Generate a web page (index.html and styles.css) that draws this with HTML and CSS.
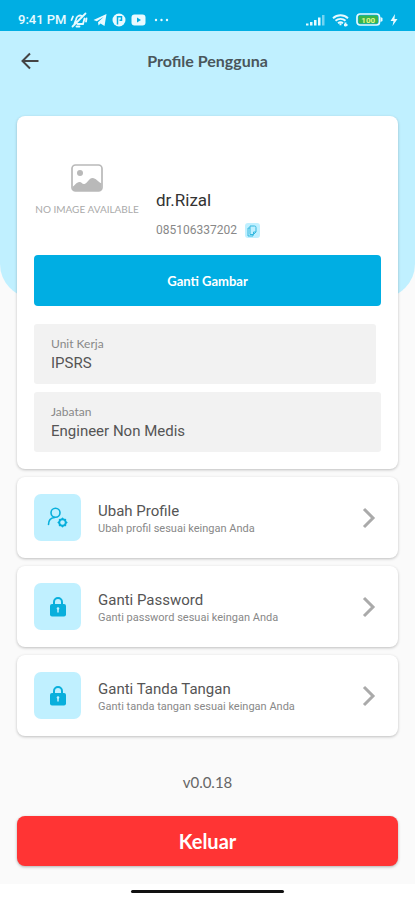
FILE: index.html
```html
<!DOCTYPE html>
<html lang="id">
<head>
<meta charset="utf-8">
<meta name="viewport" content="width=device-width, initial-scale=1">
<title>Profile Pengguna</title>
<link rel="stylesheet" href="styles.css">
</head>
<body>
<div class="status">
  <span class="time">9:41 PM</span>
  <svg class="s-bell" width="18" height="16" viewBox="0 0 18 16" fill="none" stroke="currentColor" stroke-width="1.800" stroke-linecap="round"><path d="M4.500 11.500 6 7.500C6.500 4 9.500 2.800 12 4M14.500 6.500 13 12H7.500M6.500 14.500h3M2.500 14.500 15.500 1.500M1.500 8l1.500-3.500M16 9.500l.5-3"/></svg>
  <svg class="s-gap" width="14" height="14" viewBox="0 0 14 14" fill="currentColor"><path d="M.5 7 13.500 1 11.500 13 7.500 10.500 5.500 12.500 5 9.200 10.500 4 3.800 8.200z"/></svg>
  <svg class="s-gap" width="14" height="14" viewBox="0 0 14 14"><circle cx="7" cy="7" r="6.500" fill="currentColor"/><path d="M5.500 3v8.500M5.500 3.800h4v3.400H7.500" fill="none" stroke="#00aee3" stroke-width="1.500"/></svg>
  <svg class="s-gap" width="15" height="12" viewBox="0 0 15 12"><rect x=".5" y=".5" width="14" height="11" rx="3" fill="currentColor"/><path d="M6 3.500 10 6 6 8.500z" fill="#00aee3"/></svg>
  <svg class="s-dots" width="16" height="4" viewBox="0 0 16 4" fill="currentColor"><circle cx="2" cy="2" r="1.200"/><circle cx="7.500" cy="2" r="1.200"/><circle cx="13" cy="2" r="1.200"/></svg>
  <div class="status-right">
    <svg width="19" height="12" viewBox="0 0 19 12" fill="currentColor"><path d="M0 9.500h2.500v2H0zM4 8h2.500v3.500H4zM8 6h2.500v5.500H8zM12 3.500h2.500v8H12z"/><path opacity=".5" d="M16 1h2.500v10.500H16z"/></svg>
    <svg width="17" height="14" viewBox="0 0 17 14" fill="none" stroke="currentColor" stroke-width="1.900"><path d="M1 5.200a11 11 0 0 1 15 0M3.500 7.800a7.500 7.500 0 0 1 10 0M6 10.200a4 4 0 0 1 5 0"/><path d="M8.500 10.200v2M13.500 9.500v4M12 12h3.500"/></svg>
    <svg width="27" height="13" viewBox="0 0 27 13"><rect x="1" y="1" width="22.500" height="11" rx="3" fill="none" stroke="#e8faff" stroke-width="1.700"/><path d="M24.500 4l2 1v3l-2 1z" fill="#e8faff"/><rect x="2.500" y="2.500" width="19.500" height="8" rx="1.500" fill="#38b54a"/><text class="battery" x="12.200" y="9.500" text-anchor="middle">100</text></svg>
    <svg width="8" height="12" viewBox="0 0 8 12" fill="currentColor"><path d="M5 0 .5 7H3.500L2.500 12 7.500 5H4.500z"/></svg>
  </div>
</div>
<div class="page">
  <header class="appbar">
    <button class="back" aria-label="Kembali"><svg width="20" height="18" viewBox="0 0 20 18" fill="none" stroke="currentColor" stroke-width="2"><path d="M18.500 9H3M10 1.500 2.500 9 10 16.500"/></svg></button>
    <h1>Profile Pengguna</h1>
  </header>
  <main>
    <section class="card profile">
      <div class="identity">
        <div class="photo">
          <svg width="32" height="28" viewBox="0 0 32 28"><rect x="1" y="1" width="30" height="26" rx="3.500" fill="none" stroke="#b9b9b9" stroke-width="1.700"/><circle cx="9" cy="9" r="3" fill="#b9b9b9"/><path d="M1.500 22.500C4 22 5 18 8.500 18c2.500 0 2.500 2.500 5 2 3-.6 4.500-6 8-6 3.500 0 5.500 4 9 5.500v5.500a2 2 0 0 1-2 2h-25a2 2 0 0 1-2-2z" fill="#b9b9b9"/></svg>
          <span>NO IMAGE AVAILABLE</span>
        </div>
        <div class="who">
          <h2>dr.Rizal</h2>
          <div class="phone"><span>085106337202</span>
            <button class="copy" aria-label="Salin"><svg width="10" height="12" viewBox="0 0 10 12" fill="none" stroke="currentColor" stroke-width="1"><path d="M3 1h4.500A1.500 1.500 0 0 1 9 2.500V7L6.500 9.500H3zM6.500 9.500V7H9M3 3H1v8h5V9.500"/></svg></button>
          </div>
        </div>
      </div>
      <button class="change">Ganti Gambar</button>
      <dl class="fields">
        <div class="field short"><dt>Unit Kerja</dt><dd>IPSRS</dd></div>
        <div class="field"><dt>Jabatan</dt><dd>Engineer Non Medis</dd></div>
      </dl>
    </section>
    <a class="card item" href="#profile">
      <span class="tile"><svg width="21" height="21" viewBox="0 0 21 21" fill="none" stroke="currentColor" stroke-width="1.600" stroke-linecap="round"><circle cx="8.500" cy="5.800" r="4.500"/><path d="M1.500 17.500c0-4 2.700-6.600 6.200-7"/><circle cx="15.500" cy="15.500" r="3.300" stroke-width="2"/><path stroke-width="1.500" d="M15.500 11.200v.8M15.500 19v.8M11.200 15.500h.8M19 15.500h.8M12.500 12.500l.6.600M17.900 17.900l.6.600M12.500 18.500l.6-.6M17.900 13.100l.6-.6"/></svg></span>
      <span class="label"><strong>Ubah Profile</strong><small>Ubah profil sesuai keingan Anda</small></span>
      <svg class="chevron" width="14" height="22" viewBox="0 0 14 22"><path d="M2 2l9 9-9 9"/></svg>
    </a>
    <a class="card item" href="#password">
      <span class="tile"><svg width="16" height="20" viewBox="0 0 16 20"><path d="M4 8V5a4 4 0 0 1 8 0v3" fill="none" stroke="currentColor" stroke-width="2"/><rect width="16" height="12.500" y="7" rx="2" fill="currentColor"/><path d="M8 11v4.500" stroke="#c0f0ff" stroke-width="1.500"/><circle cx="8" cy="11.500" r="1.300" fill="#c0f0ff"/></svg></span>
      <span class="label"><strong>Ganti Password</strong><small>Ganti password sesuai keingan Anda</small></span>
      <svg class="chevron" width="14" height="22" viewBox="0 0 14 22"><path d="M2 2l9 9-9 9"/></svg>
    </a>
    <a class="card item" href="#tanda-tangan">
      <span class="tile"><svg width="16" height="20" viewBox="0 0 16 20"><path d="M4 8V5a4 4 0 0 1 8 0v3" fill="none" stroke="currentColor" stroke-width="2"/><rect width="16" height="12.500" y="7" rx="2" fill="currentColor"/><path d="M8 11v4.500" stroke="#c0f0ff" stroke-width="1.500"/><circle cx="8" cy="11.500" r="1.300" fill="#c0f0ff"/></svg></span>
      <span class="label"><strong>Ganti Tanda Tangan</strong><small>Ganti tanda tangan sesuai keingan Anda</small></span>
      <svg class="chevron" width="14" height="22" viewBox="0 0 14 22"><path d="M2 2l9 9-9 9"/></svg>
    </a>
    <p class="version">v0.0.18</p>
    <button class="logout">Keluar</button>
  </main>
</div>
<div class="navbar"><span class="handle"></span></div>
</body>
</html>
```
FILE: styles.css
```css
* { box-sizing: border-box; }
body {
  margin: 0;
  min-height: 100vh;
  display: flex;
  flex-direction: column;
  background: #fafafa;
  color: #555;
  font-family: Roboto, sans-serif;
}
button { border: 0; padding: 0; font: inherit; cursor: pointer; }
h1, h2, p, dl, dd { margin: 0; }
svg { display: block; flex: none; }

.status {
  display: flex;
  align-items: center;
  height: 31px;
  padding: 8px 17px 0 18px;
  background: #00aee3;
  color: #e8faff;
}
.time { font-size: 13px; font-weight: 500; line-height: 16px; }
.s-bell { margin-left: 3px; }
.s-gap { margin-left: 5px; }
.s-dots { margin-left: 8px; }
.status-right { display: flex; align-items: center; gap: 7px; margin-left: auto; }
.battery { font: 700 8px Roboto, sans-serif; fill: #e5f58a; }

.page { position: relative; flex: 1; }
.page::before {
  content: "";
  position: absolute;
  inset: 0 0 auto;
  height: 267px;
  background: #c0f0ff;
  border-radius: 0 0 34px 34px;
}
.appbar, main { position: relative; }
.appbar {
  display: grid;
  grid-template-columns: 26px 1fr 26px;
  align-items: center;
  height: 60px;
  padding: 0 17px;
}
.back {
  display: grid;
  place-items: center;
  height: 26px;
  background: none;
  color: #444;
}
h1 {
  text-align: center;
  font: 700 16px/20px Lato, sans-serif;
  color: #4a565b;
}
main {
  display: flex;
  flex-direction: column;
  gap: 8px;
  padding: 25px 17px 17px;
}
.card {
  background: #fff;
  border-radius: 8px;
  padding: 17px;
  box-shadow: 0 1px 3px rgba(0, 0, 0, .24);
}
.identity { display: flex; gap: 16px; margin-bottom: 17px; }
.photo {
  width: 106px;
  height: 105px;
  display: flex;
  flex-direction: column;
  align-items: center;
  justify-content: center;
  gap: 11px;
  padding-top: 7px;
  color: #aaa;
  font: 400 10px/12px Lato, sans-serif;
  white-space: nowrap;
}
.who { display: flex; flex-direction: column; justify-content: flex-end; gap: 12px; }
h2 { font-size: 17px; font-weight: 400; line-height: 22px; color: #333; }
.phone { display: flex; align-items: center; gap: 8px; font-size: 12px; line-height: 15px; color: #888; }
.copy {
  display: grid;
  place-items: center;
  width: 15px;
  height: 15px;
  border-radius: 3px;
  background: #c0f0ff;
  color: #35b8df;
}
.change {
  display: block;
  width: 100%;
  height: 51px;
  border-radius: 4px;
  background: #00aee3;
  color: #fff;
  font: 700 13px/16px Lato, sans-serif;
}
.fields { display: grid; gap: 8px; margin-top: 18px; }
.field { background: #f2f2f2; border-radius: 3px; padding: 11px 17px; }
.short { margin-right: 5px; }
dt { font: 400 12px/18px Lato, sans-serif; color: #888; }
dd { font-size: 15px; line-height: 20px; color: #555; }

.item { display: flex; align-items: center; gap: 17px; text-decoration: none; }
.tile {
  display: grid;
  place-items: center;
  flex: none;
  width: 47px;
  height: 47px;
  border-radius: 7px;
  background: #c0f0ff;
  color: #08afdc;
}
.label { flex: 1; display: grid; padding-top: 4px; }
.label strong { font-size: 15px; font-weight: 400; line-height: 19px; color: #555; }
.label small { font-size: 11px; line-height: 16px; color: #888; }
.chevron { margin-right: 5px; fill: none; stroke: #aaa; stroke-width: 3px; }

.version {
  padding: 28px 0 16px;
  text-align: center;
  font: 400 15px/20px Lato, sans-serif;
  color: #666;
}
.logout {
  height: 50px;
  border-radius: 8px;
  background: #ff3434;
  color: #fff;
  font: 700 20px/24px Lato, sans-serif;
  box-shadow: 0 1px 3px rgba(0, 0, 0, .3);
}
.navbar {
  display: flex;
  justify-content: center;
  height: 16px;
  padding-top: 6px;
  background: #fff;
}
.handle { width: 37%; height: 3px; border-radius: 2px; background: #111; }
```
